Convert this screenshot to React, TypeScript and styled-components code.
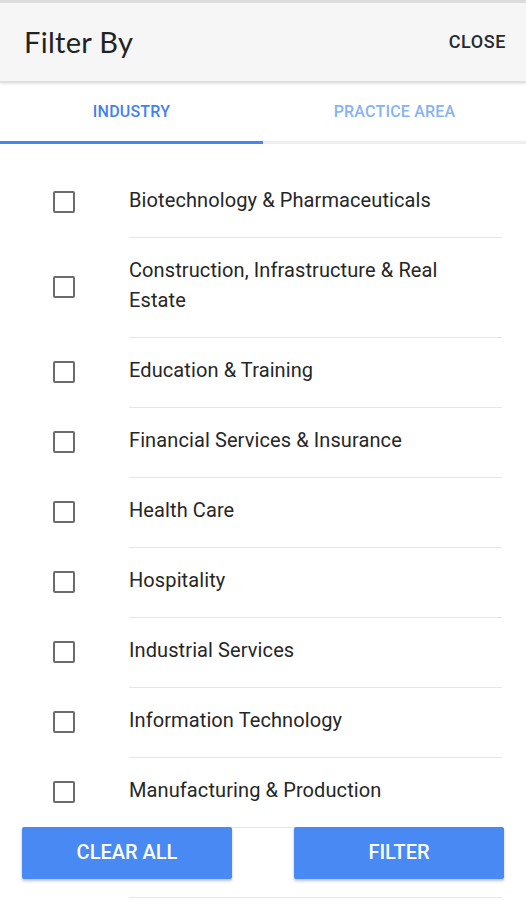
import styled, { createGlobalStyle } from "styled-components";
import { useState } from "react";

const industries = [
  "Biotechnology & Pharmaceuticals",
  "Construction, Infrastructure & Real Estate",
  "Education & Training",
  "Financial Services & Insurance",
  "Health Care",
  "Hospitality",
  "Industrial Services",
  "Information Technology",
  "Manufacturing & Production",
  "Media & Entertainment",
];

const GlobalStyle = createGlobalStyle`
  body {
    margin: 0;
    background: #ffffff;
    font-family: Roboto, "Liberation Sans", sans-serif;
  }
`;

const App = () => {
  const [tab, setTab] = useState<"industry" | "practice">("industry");
  const [checked, setChecked] = useState<string[]>([]);

  const toggle = (name: string) =>
    setChecked((prev) =>
      prev.includes(name) ? prev.filter((n) => n !== name) : [...prev, name]
    );

  return (
    <Page>
      <GlobalStyle />
      <Header>
        <Title>Filter By</Title>
        <CloseButton>CLOSE</CloseButton>
      </Header>
      <Tabs>
        <TabButton active={tab === "industry"} onClick={() => setTab("industry")}>
          INDUSTRY
        </TabButton>
        <TabButton active={tab === "practice"} onClick={() => setTab("practice")}>
          PRACTICE AREA
        </TabButton>
      </Tabs>
      <List>
        {industries.map((name) => (
          <Row key={name} onClick={() => toggle(name)}>
            <CheckCell>
              <Checkbox checked={checked.includes(name)} />
            </CheckCell>
            <Label>{name}</Label>
          </Row>
        ))}
      </List>
      <Footer>
        <ActionButton onClick={() => setChecked([])}>CLEAR ALL</ActionButton>
        <ActionButton>FILTER</ActionButton>
      </Footer>
    </Page>
  );
};

export default App;

// Styled Components
const Page = styled.div`
  width: 100%;
  min-height: 100vh;
  background: #ffffff;
`;

const Header = styled.div`
  height: 83px;
  box-sizing: border-box;
  border-top: 3px solid #dcdcdc;
  border-bottom: 2px solid #e0e0e0;
  background: #f6f6f6;
  display: flex;
  flex-direction: row;
  align-items: center;
  justify-content: space-between;
  padding: 0 20px 0 24px;
  box-shadow: 0 1px 3px rgba(0, 0, 0, 0.1);
`;

const Title = styled.div`
  font-family: Lato, Roboto, sans-serif;
  font-size: 29px;
  color: #222222;
  letter-spacing: 0.3px;
  padding-bottom: 2px;
`;

const CloseButton = styled.div`
  font-size: 18px;
  font-weight: 500;
  color: #2a2a2a;
  letter-spacing: 0.6px;
  cursor: pointer;
  padding-bottom: 2px;
`;

const Tabs = styled.div`
  display: grid;
  grid-template-columns: 263px 1fr;
  height: 60px;
  margin-top: 1px;
`;

const TabButton = styled.div<{ active: boolean }>`
  display: flex;
  align-items: center;
  justify-content: center;
  box-sizing: border-box;
  padding-bottom: 3px;
  font-size: 16px;
  font-weight: 500;
  letter-spacing: 0.2px;
  color: ${(p) => (p.active ? "#3f82ee" : "#86b3f4")};
  border-bottom: 3px solid ${(p) => (p.active ? "#4285f4" : "#eeeeee")};
  cursor: pointer;
`;

const List = styled.div`
  padding: 24px 24px 24px 0;
`;

const Row = styled.div`
  display: flex;
  flex-direction: row;
  align-items: stretch;
  cursor: pointer;
`;

const CheckCell = styled.div`
  width: 129px;
  flex-shrink: 0;
  display: flex;
  align-items: center;
  padding-left: 53px;
  box-sizing: border-box;
  padding-bottom: 2px;
`;

const Checkbox = styled.div<{ checked: boolean }>`
  width: 22px;
  height: 22px;
  box-sizing: border-box;
  border: 2px solid #6b6b6b;
  border-radius: 2px;
  background: ${(p) => (p.checked ? "#4285f4" : "transparent")};
  border-color: ${(p) => (p.checked ? "#4285f4" : "#6b6b6b")};
`;

const Label = styled.div`
  flex: 1;
  padding: 17px 20px 22px 0;
  font-size: 20px;
  line-height: 30px;
  color: #262626;
  letter-spacing: 0.1px;
  border-bottom: 1px solid #e6e6e6;
`;

const Footer = styled.div`
  position: fixed;
  left: 0;
  right: 0;
  bottom: 4px;
  height: 67px;
  background: #ffffff;
  display: flex;
  flex-direction: row;
  justify-content: space-between;
  align-items: flex-start;
  padding: 0 22px;
  box-sizing: border-box;
`;

const ActionButton = styled.div`
  width: 210px;
  height: 52px;
  margin-top: -2px;
  background: #4889f4;
  border-radius: 2px;
  box-shadow: 0 2px 3px rgba(0, 0, 0, 0.25);
  color: #ffffff;
  font-size: 20px;
  font-weight: 500;
  display: flex;
  align-items: center;
  justify-content: center;
  padding-bottom: 2px;
  box-sizing: border-box;
  cursor: pointer;
`;
